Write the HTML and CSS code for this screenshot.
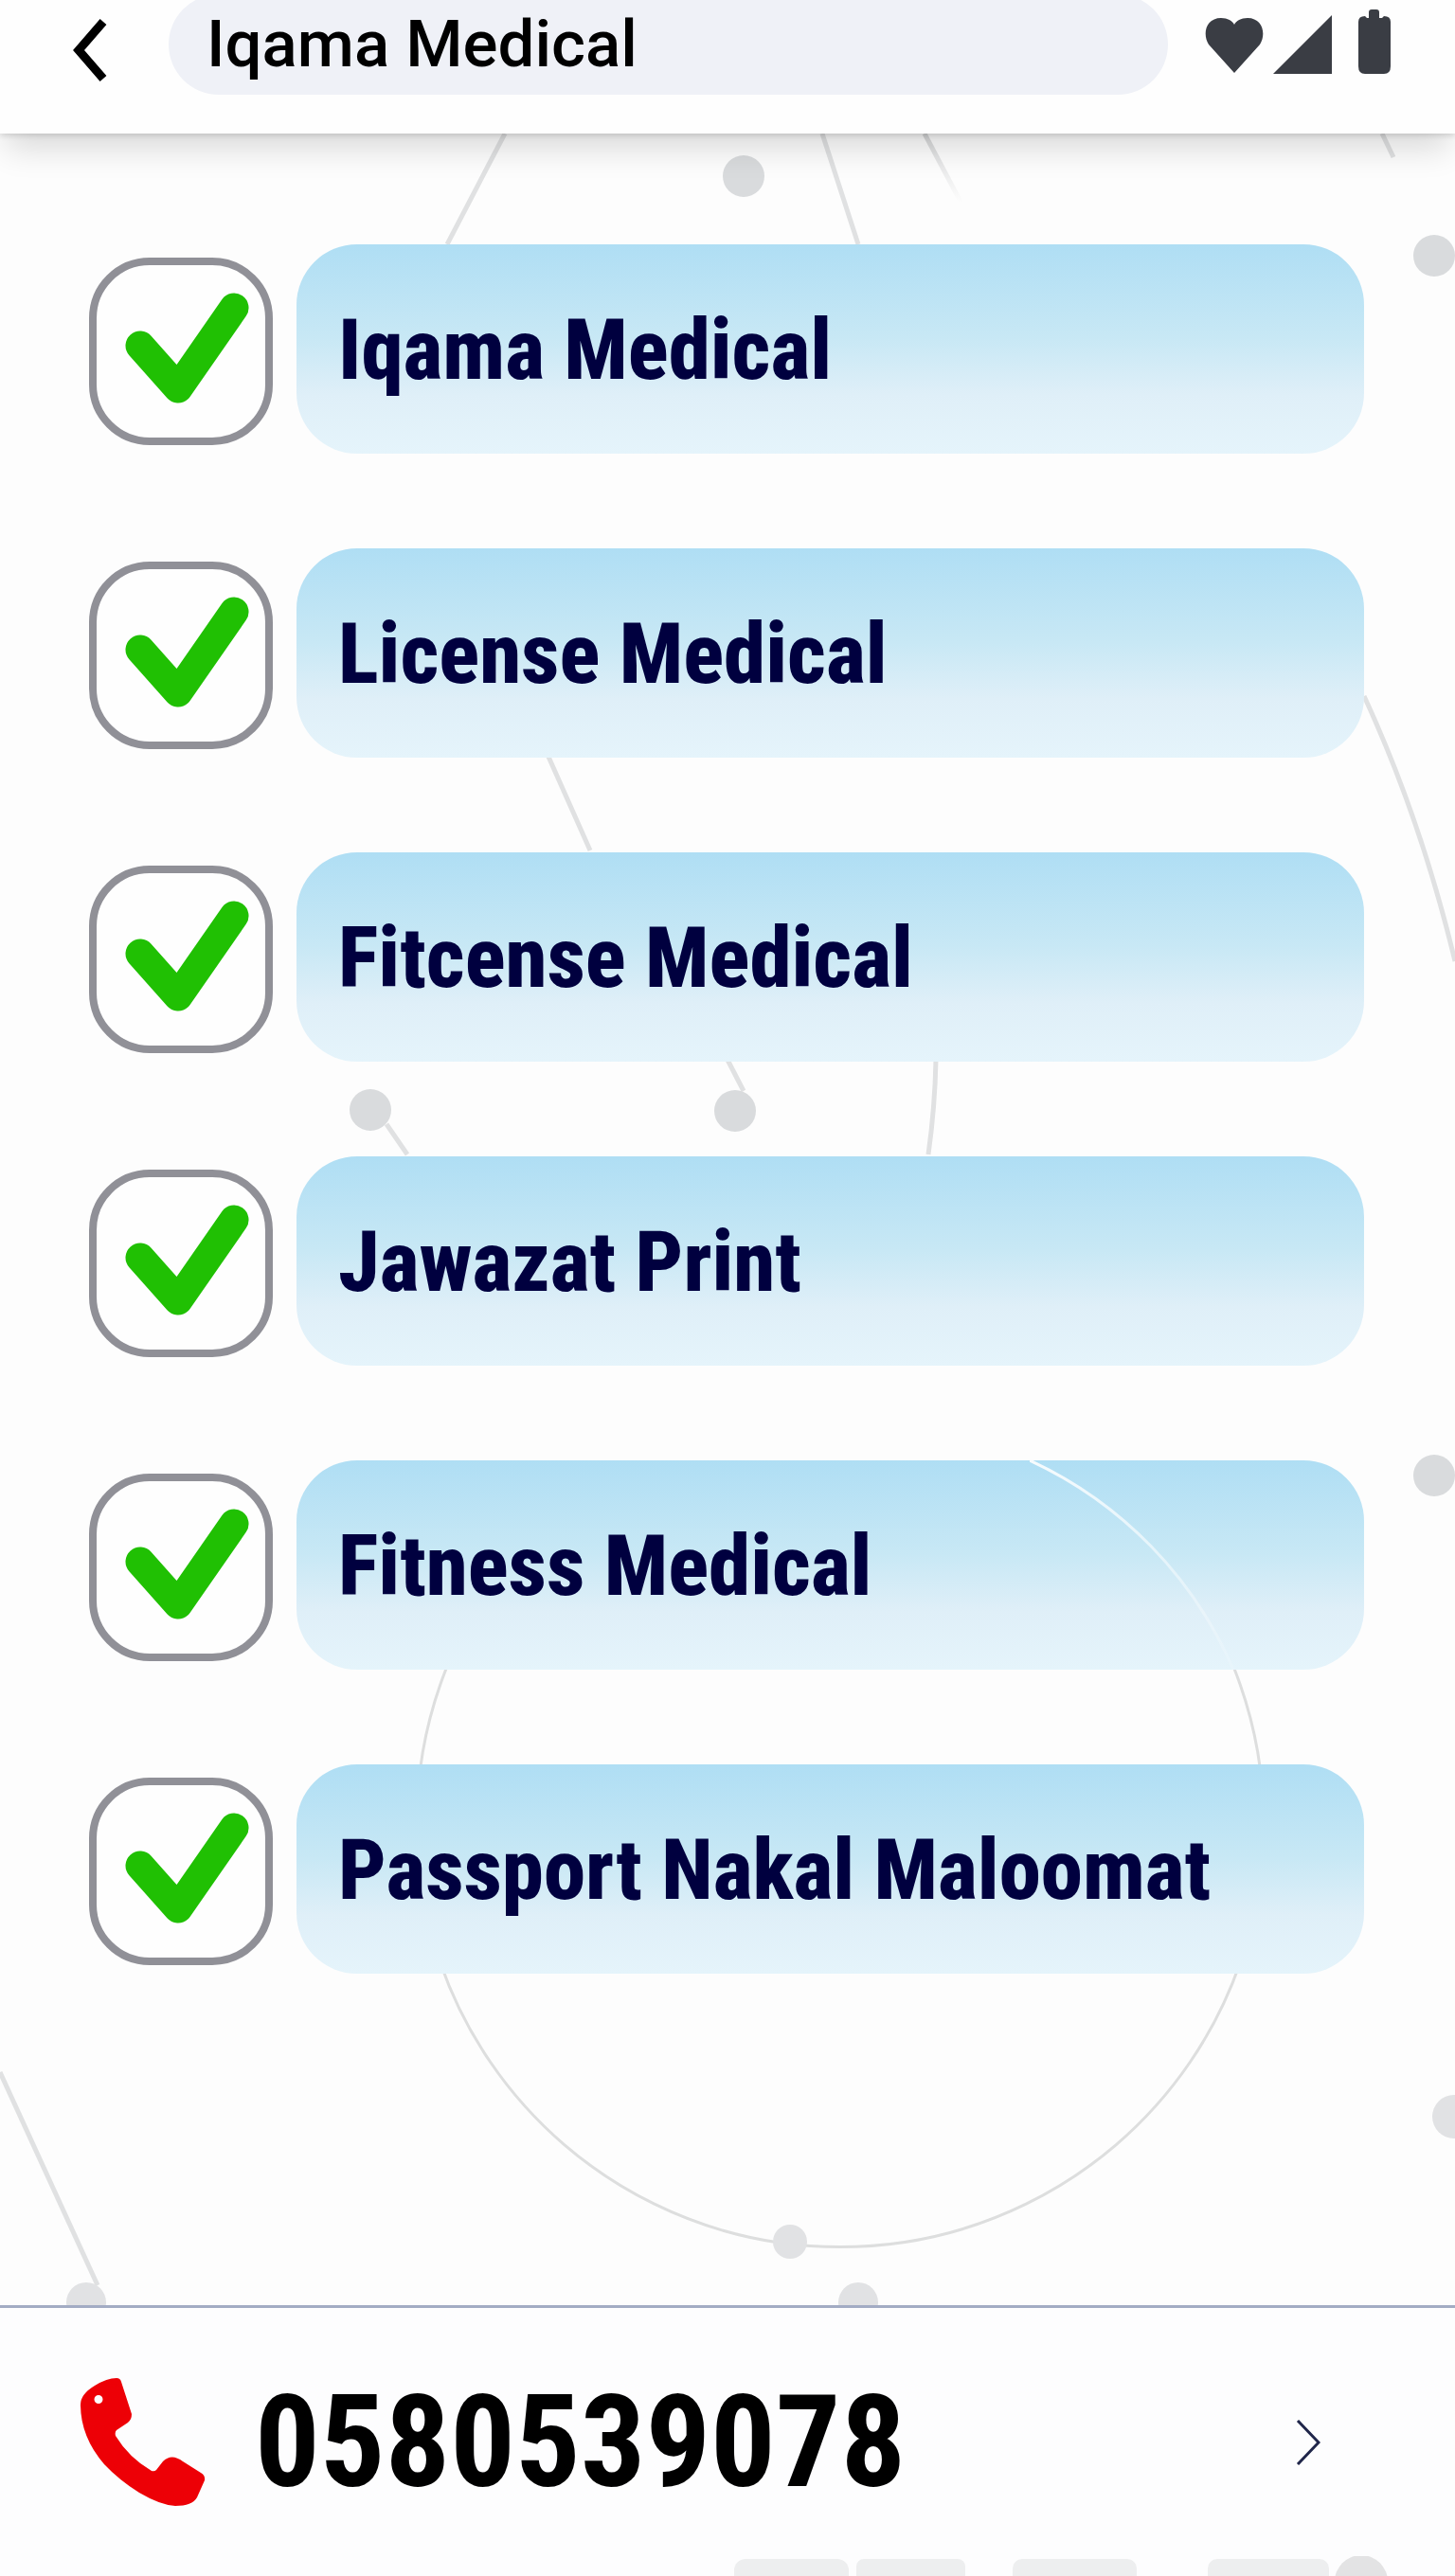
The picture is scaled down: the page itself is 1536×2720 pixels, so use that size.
FILE: index.html
```html
<!DOCTYPE html>
<html lang="en">
<head>
  <meta charset="UTF-8">
  <meta name="viewport" content="width=device-width, initial-scale=1.0">
  <title>Iqama Medical</title>
  <link rel="stylesheet" href="styles.css">
</head>
<body>
  <!-- Top bar -->
  <header class="topbar">
    <button class="back" type="button" aria-label="Back">
      <svg width="36" height="66" viewBox="0 0 36 66"><path d="M32 3L6 33l26 30" fill="none" stroke="#000" stroke-width="9"/></svg>
    </button>
    <h1 class="title">Iqama Medical</h1>
    <div class="status">
      <svg width="62" height="60" viewBox="0 0 62 60"><path d="M31 59L4 29C-3 18 1 1 17 1c7 0 12 3 14 7 2-4 7-7 14-7 16 0 20 17 13 28z"/></svg>
      <svg width="62" height="62" viewBox="0 0 62 62"><path d="M62 0v62H0z"/></svg>
      <svg class="battery" width="34" height="68" viewBox="0 0 34 68"><path d="M11 9V3q0-3 3-3h5q3 0 3 3v6h3l2-2q7 0 7 6v47q0 8-7 8H7q-7 0-7-8V13q0-6 7-6l2 2z"/></svg>
    </div>
  </header>

  <main class="services">
    <!-- Background network -->
    <svg class="network" viewBox="0 141 1536 2293" preserveAspectRatio="xMidYMin slice" aria-hidden="true">
      <defs>
        <linearGradient id="fade" x1="0" y1="0" x2="0" y2="1">
          <stop offset="0" stop-color="#d6d7d8"/>
          <stop offset="1" stop-color="#fdfdfd"/>
        </linearGradient>
      </defs>
      <g fill="none" stroke="#e0e1e2" stroke-width="5">
        <path d="M533 141L472 258M868 141l38 117M1459 141l12 25"/>
        <path d="M976 141l38 72" stroke="url(#fade)"/>
        <path d="M579 799l44 99M1440 735q60 130 96 280M768 1119l17 33M408 1187l22 32M988 1119q-1 50-8 100"/>
        <path d="M0 2188l103 225"/>
        <path d="M471 1762A447 447 0 1 0 1303 1762" stroke="#dddede" stroke-width="3"/>
      </g>
      <g fill="#d9dbdd">
        <circle cx="785" cy="186" r="22"/>
        <circle cx="1514" cy="270" r="22"/>
        <circle cx="391" cy="1172" r="22"/>
        <circle cx="776" cy="1173" r="22"/>
        <circle cx="1514" cy="1558" r="22"/>
      </g>
      <g fill="#e1e2e4">
        <circle cx="1535" cy="2235" r="23"/>
        <circle cx="834" cy="2367" r="18"/>
        <circle cx="91" cy="2431" r="21"/>
        <circle cx="906" cy="2431" r="21"/>
      </g>
    </svg>

    <ul class="list">
      <li class="row">
        <span class="check">
          <input type="checkbox" id="iqama" checked>
          <svg viewBox="0 0 194 198"><path d="M54 93l40 45 59-85"/></svg>
        </span>
        <label class="card" for="iqama">Iqama Medical</label>
      </li>
      <li class="row">
        <span class="check">
          <input type="checkbox" id="license" checked>
          <svg viewBox="0 0 194 198"><path d="M54 93l40 45 59-85"/></svg>
        </span>
        <label class="card" for="license">License Medical</label>
      </li>
      <li class="row">
        <span class="check">
          <input type="checkbox" id="fitcense" checked>
          <svg viewBox="0 0 194 198"><path d="M54 93l40 45 59-85"/></svg>
        </span>
        <label class="card" for="fitcense">Fitcense Medical</label>
      </li>
      <li class="row">
        <span class="check">
          <input type="checkbox" id="jawazat" checked>
          <svg viewBox="0 0 194 198"><path d="M54 93l40 45 59-85"/></svg>
        </span>
        <label class="card" for="jawazat">Jawazat Print</label>
      </li>
      <li class="row">
        <span class="check">
          <input type="checkbox" id="fitness" checked>
          <svg viewBox="0 0 194 198"><path d="M54 93l40 45 59-85"/></svg>
        </span>
        <label class="card" for="fitness">Fitness Medical
          <svg class="arc" width="353" height="221" viewBox="0 0 353 221" aria-hidden="true">
            <defs>
              <linearGradient id="shine" x1="0" y1="0" x2="0" y2="1">
                <stop offset="0" stop-color="#fff" stop-opacity=".9"/>
                <stop offset="1" stop-color="#fff" stop-opacity=".1"/>
              </linearGradient>
            </defs>
            <path d="M0 0A430 430 0 0 1 215 221" fill="none" stroke="url(#shine)" stroke-width="3"/>
          </svg>
        </label>
      </li>
      <li class="row">
        <span class="check">
          <input type="checkbox" id="passport" checked>
          <svg viewBox="0 0 194 198"><path d="M54 93l40 45 59-85"/></svg>
        </span>
        <label class="card" for="passport">Passport Nakal Maloomat</label>
      </li>
    </ul>
  </main>

  <!-- Contact bar -->
  <footer class="contact">
    <a class="call" href="tel:0580539078">
      <svg width="132" height="136" viewBox="0 0 132 136"><path fill="#ed0006" fill-rule="evenodd" d="M38 0Q28 0 15 8 0 17 0 28 0 62 25 91 41 108 62 121 84 134 100 135 118 135 123 126L131 108Q132 103 127 100L108 88Q96 79 87 88L80 97Q78 99 75 98 51 84 37 61 36 57 38 55L50 47Q54 44 54 38L43 4Q42 0 38 0zM19 18a4 4 0 1 0 0 9 4 4 0 0 0 0-9z"/></svg>
      <span class="number">0580539078</span>
      <svg class="next" width="26" height="48" viewBox="0 0 26 48"><path d="M2 1l22 23L2 47" fill="none" stroke="#20264a" stroke-width="3"/></svg>
    </a>
    <svg class="tabs" viewBox="0 0 1536 21" aria-hidden="true">
      <g fill="#edeeef">
        <rect x="775" y="3" width="121" height="40" rx="12"/>
        <rect x="904" y="3" width="115" height="40" rx="8"/>
        <rect x="1069" y="3" width="131" height="40" rx="10"/>
        <rect x="1275" y="3" width="128" height="40" rx="10"/>
      </g>
      <circle cx="1437" cy="27" r="28" fill="#e3e3e4"/>
    </svg>
  </footer>
</body>
</html>
```

FILE: styles.css
```css
* {
  box-sizing: border-box;
}

body {
  margin: 0;
  min-height: 100vh;
  display: flex;
  flex-direction: column;
  background-color: #fdfdfd;
  font-family: "Roboto Condensed", "Roboto", Arial, sans-serif;
}

svg {
  display: block;
}

/* Top bar */
.topbar {
  position: relative;
  z-index: 1;
  display: flex;
  align-items: flex-start;
  height: 141px;
  padding: 0 68px 0 77px;
  background-color: #fefefe;
  box-shadow: 0 22px 32px -6px rgba(0, 0, 0, 0.14), 0 2px 6px rgba(0, 0, 0, 0.14);
}

.back {
  margin: 20px 65px 0 0;
  padding: 0;
  border: none;
  background: none;
  cursor: pointer;
}

.title {
  flex: 1;
  height: 106px;
  margin: -6px 39px 0 0;
  padding-left: 40px;
  border-radius: 53px;
  background-color: #eff1f7;
  color: #000;
  font-family: "Roboto", Arial, sans-serif;
  font-size: 69px;
  font-weight: 500;
  line-height: 106px;
}

.status {
  display: flex;
  align-items: flex-end;
  gap: 10px;
  height: 78px;
  fill: #3a3d44;
}

.battery {
  margin-left: 18px;
}

/* Service list */
.services {
  position: relative;
  flex: 1;
  padding: 117px 96px 120px 94px;
}

.network {
  position: absolute;
  top: 0;
  left: 0;
  width: 100%;
  height: 100%;
}

.list {
  position: relative;
  display: flex;
  flex-direction: column;
  gap: 100px;
  margin: 0;
  padding: 0;
  list-style: none;
}

.row {
  display: flex;
  align-items: center;
  gap: 25px;
}

.check {
  position: relative;
  width: 194px;
  height: 198px;
  margin-top: 4px;
}

.check input {
  appearance: none;
  width: 100%;
  height: 100%;
  margin: 0;
  border: 8px solid #909097;
  border-radius: 64px;
  background-color: #fefefe;
  cursor: pointer;
}

.check svg {
  position: absolute;
  top: 0;
  left: 0;
  width: 100%;
  height: 100%;
  fill: none;
  stroke: #20c003;
  stroke-width: 31px;
  stroke-linecap: round;
  stroke-linejoin: round;
  pointer-events: none;
  visibility: hidden;
}

.check input:checked + svg {
  visibility: visible;
}

.card {
  position: relative;
  flex: 1;
  height: 221px;
  padding-left: 44px;
  border-radius: 64px;
  background: linear-gradient(#afdef4, #c8e8f5 45%, #dfeff8 72%, #e5f4fb);
  color: #00003f;
  font-size: 89px;
  font-weight: 800;
  line-height: 224px;
  white-space: nowrap;
  cursor: pointer;
}

.arc {
  position: absolute;
  top: 0;
  right: 0;
}

/* Contact bar */
.contact {
  position: relative;
  height: 286px;
  border-top: 3px solid #a3acc4;
  background-color: #fdfdfe;
}

.call {
  display: flex;
  align-items: center;
  height: 100%;
  padding: 0 142px 0 85px;
  color: #000;
  text-decoration: none;
}

.number {
  margin-left: 52px;
  font-size: 136px;
  font-weight: bold;
  line-height: 160px;
}

.next {
  margin-left: auto;
}

.tabs {
  position: absolute;
  bottom: 0;
  left: 0;
  width: 100%;
}
```
